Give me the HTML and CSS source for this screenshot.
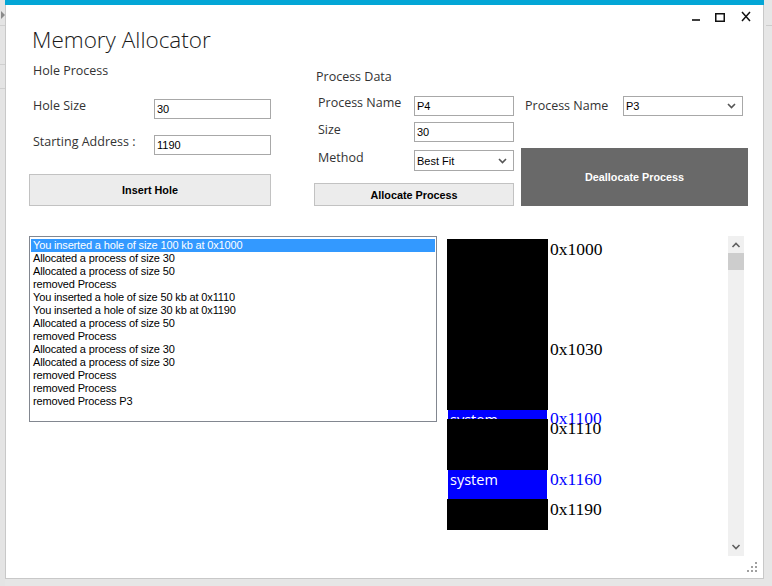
FILE: index.html
```html
<!DOCTYPE html>
<html>
<head>
<meta charset="utf-8">
<link rel="stylesheet" href="styles.css">
<title>Memory Allocator</title>
</head>
<body>
<div class="screen">
  <div class="behind-left">
    <span class="tri"></span>
    <span class="hl hl1"></span>
    <span class="hl hl2"></span>
    <span class="hl hl3"></span>
  </div>
  <div class="window">
    <div class="accent"></div>
    <div class="titlebar">
      <svg class="controls" width="60" height="12" viewBox="0 0 60 12">
        <rect x="1" y="8.2" width="8" height="1.6" fill="#111"/>
        <rect x="24.75" y="2.75" width="8.5" height="7.5" fill="none" stroke="#111" stroke-width="1.5"/>
        <path d="M51 1 L59 10 M59 1 L51 10" stroke="#111" stroke-width="1.5" fill="none"/>
      </svg>
    </div>
    <div class="top">
      <div class="col col-left">
        <div class="title">Memory Allocator</div>
        <div class="section">Hole Process</div>
        <div class="row row-a">
          <span class="lbl lbl-left">Hole Size</span>
          <div class="tb tb-left">30</div>
        </div>
        <div class="row row-b">
          <span class="lbl lbl-left">Starting Address :</span>
          <div class="tb tb-left">1190</div>
        </div>
        <div class="btn btn-insert">Insert Hole</div>
      </div>
      <div class="col col-mid">
        <div class="section section-mid">Process Data</div>
        <div class="row row-pn">
          <span class="lbl lbl-mid">Process Name</span>
          <div class="tb tb-mid">P4</div>
        </div>
        <div class="row row-size">
          <span class="lbl lbl-mid lbl-size">Size</span>
          <div class="tb tb-mid">30</div>
        </div>
        <div class="row row-method">
          <span class="lbl lbl-mid lbl-size">Method</span>
          <div class="cb cb-mid"><span>Best Fit</span>
            <svg class="chev" width="9" height="6" viewBox="0 0 9 6"><path d="M1 1 L4.5 4.5 L8 1" stroke="#555" stroke-width="1.6" fill="none"/></svg>
          </div>
        </div>
        <div class="btn btn-alloc">Allocate Process</div>
      </div>
      <div class="col col-right">
        <div class="row row-dpn">
          <span class="lbl lbl-right">Process Name</span>
          <div class="cb cb-right"><span>P3</span>
            <svg class="chev" width="9" height="6" viewBox="0 0 9 6"><path d="M1 1 L4.5 4.5 L8 1" stroke="#555" stroke-width="1.6" fill="none"/></svg>
          </div>
        </div>
        <div class="btn btn-dealloc">Deallocate Process</div>
      </div>
    </div>
    <div class="bottom">
      <div class="listbox">
        <div class="item selected">You inserted a hole of size 100 kb at 0x1000</div>
        <div class="item">Allocated a process of size 30</div>
        <div class="item">Allocated a process of size 50</div>
        <div class="item">removed Process</div>
        <div class="item">You inserted a hole of size 50 kb at 0x1110</div>
        <div class="item">You inserted a hole of size 30 kb at 0x1190</div>
        <div class="item">Allocated a process of size 50</div>
        <div class="item">removed Process</div>
        <div class="item">Allocated a process of size 30</div>
        <div class="item">Allocated a process of size 30</div>
        <div class="item">removed Process</div>
        <div class="item">removed Process</div>
        <div class="item">removed Process P3</div>
      </div>
      <div class="panel">
        <div class="blk black" style="top:3px;height:171px"></div>
        <div class="blk blue" style="top:174px;height:29px">system</div>
        <div class="blk black" style="top:183px;height:51px"></div>
        <div class="blk blue" style="top:234px;height:29px">system</div>
        <div class="blk black" style="top:263px;height:31px"></div>
        <div class="addr" style="top:3px">0x1000</div>
        <div class="addr" style="top:103px">0x1030</div>
        <div class="addr addr-blue" style="top:172px">0x1100</div>
        <div class="addr" style="top:182px">0x1110</div>
        <div class="addr addr-blue" style="top:233px">0x1160</div>
        <div class="addr" style="top:263px">0x1190</div>
        <div class="vscroll">
          <svg class="arrow-up" width="16" height="8" viewBox="0 0 16 8"><path d="M4.5 6 L8 2.5 L11.5 6" stroke="#606060" stroke-width="1.6" fill="none"/></svg>
          <div class="thumb"></div>
          <div class="track"></div>
          <svg class="arrow-down" width="16" height="8" viewBox="0 0 16 8"><path d="M4.5 2 L8 5.5 L11.5 2" stroke="#606060" stroke-width="1.6" fill="none"/></svg>
        </div>
      </div>
    </div>
    <div class="footer">
      <svg class="grip" width="12" height="12" viewBox="0 0 12 12">
        <rect x="9" y="0" width="2" height="2" fill="#a0a0a0"/>
        <rect x="5" y="4" width="2" height="2" fill="#a0a0a0"/>
        <rect x="9" y="4" width="2" height="2" fill="#a0a0a0"/>
        <rect x="1" y="8" width="2" height="2" fill="#a0a0a0"/>
        <rect x="5" y="8" width="2" height="2" fill="#a0a0a0"/>
        <rect x="9" y="8" width="2" height="2" fill="#a0a0a0"/>
      </svg>
    </div>
  </div>
  <div class="behind-right">
    <span class="hl hlr"></span>
  </div>
</div>
</body>
</html>
```
FILE: styles.css
```css
html, body {
  margin: 0;
  padding: 0;
  background: #e6e6e6;
}
.screen {
  display: flex;
  width: 772px;
  height: 586px;
  overflow: hidden;
  background: #e6e6e6;
}
.behind-left {
  position: relative;
  width: 5px;
  flex: none;
  background: #e4e4e4;
}
.behind-left .tri {
  position: absolute;
  left: 1px;
  top: 11px;
  width: 0;
  height: 0;
  border-top: 4px solid transparent;
  border-bottom: 4px solid transparent;
  border-left: 4px solid #8a8a8a;
}
.hl {
  position: absolute;
  left: 0;
  width: 100%;
  height: 1px;
  background: #cfcfcf;
}
.hl1 { top: 25px; }
.hl2 { top: 64px; }
.hl3 { top: 88px; }
.behind-right {
  position: relative;
  width: 8px;
  flex: none;
  background: #e6e6e6;
}
.hlr { top: 25px; left: 2px; background: #cccccc; }

.window {
  width: 759px;
  height: 579px;
  flex: none;
  box-sizing: border-box;
  border: 1px solid #c8c8c8;
  border-top: none;
  background: #ffffff;
  display: flex;
  flex-direction: column;
  font-family: "Open Sans", "Noto Sans", sans-serif;
  color: #333;
}
.accent {
  height: 5px;
  background: #03a6d6;
  margin: 0 -1px;
}
.titlebar {
  height: 19px;
  display: flex;
  justify-content: flex-end;
  padding-right: 12px;
  box-sizing: border-box;
  padding-top: 6px;
}
.controls { display: block; }

.top {
  display: flex;
  align-items: flex-start;
  padding-left: 23px;
  height: 182px;
}
.col { display: flex; flex-direction: column; }
.col-left { width: 242px; }
.col-mid { width: 200px; margin-left: 43px; }
.col-right { width: 227px; margin-left: 7px; }

.title {
  font-weight: 300;
  font-size: 22.5px;
  line-height: 32px;
  height: 32px;
  padding-left: 3px;
  color: #1a1a1a;
  white-space: nowrap;
}
.section {
  font-size: 12.5px;
  line-height: 18px;
  margin-top: 6px;
  padding-left: 4px;
}
.section-mid {
  margin-top: 44px;
  padding-left: 2px;
}
.row {
  display: flex;
  align-items: flex-start;
}
.row-a { margin-top: 19px; }
.row-b { margin-top: 16px; }
.lbl {
  font-size: 12.5px;
  white-space: nowrap;
  padding-left: 4px;
  box-sizing: border-box;
  flex: none;
}
.lbl-left { width: 125px; line-height: 13px; }
.lbl-mid { width: 100px; line-height: 14px; }
.lbl-size { line-height: 16px; }
.lbl-right { width: 102px; line-height: 20px; }

.tb, .cb {
  box-sizing: border-box;
  border: 1px solid #a8a8a8;
  background: #fff;
  height: 20px;
  font-family: "Liberation Sans", Arial, sans-serif;
  font-size: 11px;
  line-height: 18px;
  padding-left: 2px;
  color: #000;
  flex: none;
}
.tb-left { width: 117px; }
.tb-mid { width: 100px; }
.row-pn { margin-top: 10px; }
.row-size { margin-top: 6px; }
.row-method { margin-top: 8px; }
.cb {
  display: flex;
  align-items: center;
  justify-content: space-between;
  padding-right: 6px;
}
.cb-mid { width: 100px; height: 21px; }
.cb-right { width: 120px; }
.chev { display: block; }
.row-dpn { margin-top: 72px; }

.btn {
  box-sizing: border-box;
  display: flex;
  align-items: center;
  justify-content: center;
  font-family: "Liberation Sans", Arial, sans-serif;
  font-weight: bold;
  font-size: 10.8px;
  color: #000;
}
.btn-insert {
  margin-top: 19px;
  height: 32px;
  width: 242px;
  background: #ececec;
  border: 1px solid #c2c2c2;
}
.btn-alloc {
  margin-top: 12px;
  height: 23px;
  width: 200px;
  background: #ececec;
  border: 1px solid #c2c2c2;
}
.btn-dealloc {
  margin-top: 32px;
  height: 58px;
  width: 227px;
  background: #696969;
  color: #fff;
}

.bottom {
  display: flex;
  align-items: flex-start;
  padding-left: 23px;
  margin-top: 30px;
}
.listbox {
  box-sizing: border-box;
  width: 408px;
  height: 186px;
  border: 1px solid #828790;
  padding: 2px 1px 0 1px;
  font-family: "Liberation Sans", Arial, sans-serif;
  font-size: 11px;
  letter-spacing: -0.15px;
  color: #000;
}
.item {
  height: 13px;
  line-height: 13px;
  padding-left: 2px;
  white-space: nowrap;
}
.item.selected {
  background: #3399ff;
  color: #fff;
}
.panel {
  position: relative;
  margin-left: 9px;
  width: 298px;
  height: 320px;
  overflow: hidden;
}
.blk {
  position: absolute;
  box-sizing: border-box;
}
.black {
  left: 1px;
  width: 101px;
  background: #000;
}
.blue {
  left: 2px;
  width: 99px;
  background: #0000ff;
  color: #fff;
  font-family: "Open Sans", "Noto Sans", sans-serif;
  font-size: 14.5px;
  line-height: 20px;
  padding-left: 2px;
  overflow: hidden;
}
.addr {
  position: absolute;
  left: 104px;
  font-family: "Liberation Serif", "Times New Roman", serif;
  font-size: 17.5px;
  line-height: 20px;
  color: #000;
}
.addr-blue { color: #0000ff; }
.vscroll {
  position: absolute;
  right: 0;
  top: 0;
  width: 16px;
  height: 320px;
  background: #f0f0f0;
  display: flex;
  flex-direction: column;
}
.arrow-up { margin-top: 5px; display: block; }
.thumb {
  margin-top: 4px;
  height: 17px;
  background: #cdcdcd;
}
.track { flex: 1; }
.arrow-down { margin-bottom: 5px; display: block; }

.footer {
  flex: 1;
  display: flex;
  justify-content: flex-end;
  align-items: flex-end;
  padding: 0 5px 4px 0;
}
.grip { display: block; }
```
